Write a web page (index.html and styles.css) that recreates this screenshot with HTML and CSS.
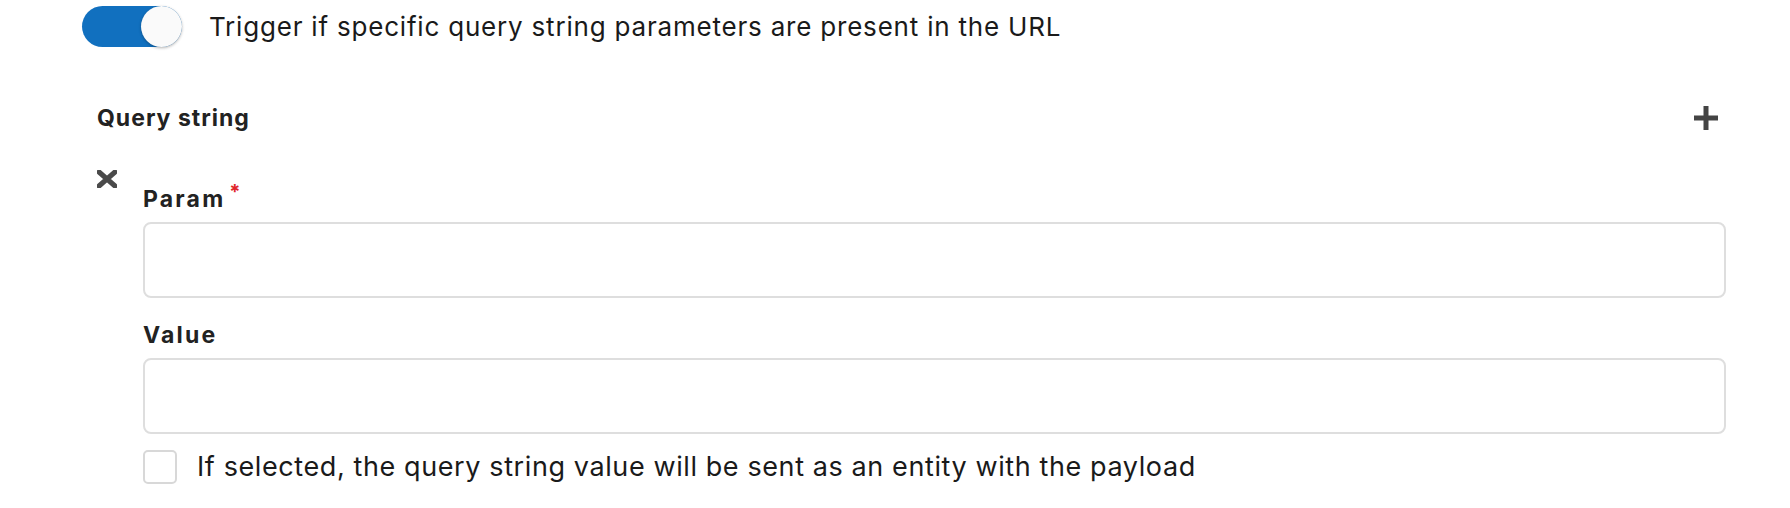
FILE: index.html
```html
<!DOCTYPE html>
<html>
<head>
<meta charset="utf-8">
<link rel="stylesheet" href="styles.css">
</head>
<body>
<div class="page">
  <div class="toggle-row">
    <span class="toggle"><span class="knob"></span></span>
    <span class="toggle-text">Trigger if specific query string parameters are present in the URL</span>
  </div>
  <div class="section">
    <div class="section-head">
      <span class="section-title">Query string</span>
      <svg class="plus" viewBox="0 0 24 24" width="24" height="24"><path d="M9.5 0h5v9.5H24v5h-9.5V24h-5v-9.5H0v-5h9.5z" fill="#444"/></svg>
    </div>
    <div class="item">
      <div class="remove">
        <svg viewBox="0 0 20 18" width="20" height="18"><path d="M2 2L18 16M18 2L2 16" stroke="#4a4a4a" stroke-width="5" stroke-linecap="round"/></svg>
      </div>
      <div class="fields">
        <label class="field-label">Param<span class="req">*</span></label>
        <div class="input"></div>
        <label class="field-label second">Value</label>
        <div class="input"></div>
        <div class="check-row">
          <span class="checkbox"></span>
          <span class="check-text">If selected, the query string value will be sent as an entity with the payload</span>
        </div>
      </div>
    </div>
  </div>
</div>
</body>
</html>
```
FILE: styles.css
```css
html, body {
  margin: 0;
  padding: 0;
  background: #fff;
}
.page {
  padding: 6px 64px 0 82px;
  font-family: Inter, "Liberation Sans", sans-serif;
  color: #1c1c1c;
}
.toggle-row {
  display: flex;
  align-items: center;
  gap: 27px;
  height: 41px;
}
.toggle {
  position: relative;
  width: 100px;
  height: 41px;
  border-radius: 21px;
  background: #1170bf;
  flex: none;
}
.knob {
  position: absolute;
  right: 0;
  top: 0;
  width: 41px;
  height: 41px;
  border-radius: 50%;
  background: #fafafa;
  box-shadow: 0 1px 3px rgba(0,0,0,0.3);
}
.toggle-text {
  font-size: 26px;
  line-height: 41px;
  letter-spacing: 0.8px;
  color: #1a1a1a;
}
.section {
  padding-left: 15px;
}
.section-head {
  margin-top: 56px;
  height: 30px;
  display: flex;
  align-items: center;
  justify-content: space-between;
  padding-right: 8px;
}
.section-title {
  font-size: 23px;
  font-weight: 700;
  letter-spacing: 1px;
  color: #222;
}
.plus {
  display: block;
  width: 24px;
  height: 24px;
}
.item {
  display: flex;
  margin-top: 37px;
}
.remove {
  width: 46px;
  flex: none;
}
.remove svg {
  display: block;
}
.fields {
  flex: 1;
  display: flex;
  flex-direction: column;
}
.field-label {
  display: block;
  font-size: 23px;
  font-weight: 700;
  letter-spacing: 2.2px;
  line-height: 28px;
  color: #222;
  margin-top: 15px;
  margin-bottom: 9px;
}
.field-label.second {
  margin-top: 23px;
}
.req {
  color: #e0262b;
  font-size: 20px;
  vertical-align: 8px;
  margin-left: 4px;
  line-height: 14px;
  letter-spacing: 0;
}
.input {
  height: 72px;
  border: 2px solid #dedede;
  border-radius: 8px;
}
.check-row {
  display: flex;
  align-items: center;
  gap: 20px;
  margin-top: 16px;
}
.checkbox {
  width: 30px;
  height: 30px;
  border: 2px solid #d8d8d8;
  border-radius: 5px;
  flex: none;
}
.check-text {
  font-size: 27px;
  line-height: 34px;
  letter-spacing: 0.6px;
  color: #1a1a1a;
}
```
